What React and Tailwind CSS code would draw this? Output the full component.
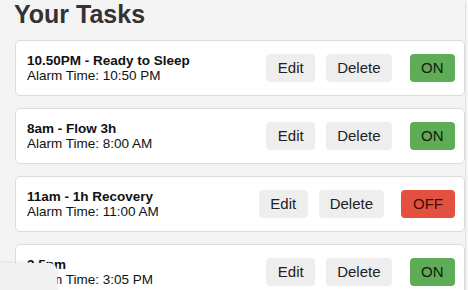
const TASKS = [
  { id: 1, title: '10.50PM - Ready to Sleep', time: '10:50 PM', on: true },
  { id: 2, title: '8am - Flow 3h', time: '8:00 AM', on: true },
  { id: 3, title: '11am - 1h Recovery', time: '11:00 AM', on: false },
  { id: 4, title: '3.5pm', time: '3:05 PM', on: true },
]

export default function App() {
  return (
    <div className="relative h-[290px] overflow-hidden bg-[#f4f4f4] font-['Liberation_Sans',Arial,sans-serif]">
      <div className="w-[466px] h-full border-r border-[#e2e2e2] pl-[15px]">
        <h1 className="mt-[2px] -ml-px text-[25px] leading-none font-bold text-[#333]">Your Tasks</h1>

        <div className="mt-[13px] flex flex-col gap-[12px]">
          {TASKS.map(t => (
            <div
              key={t.id}
              className="flex h-[56px] shrink-0 items-center rounded-[5px] border border-[#dcdcdc] bg-white pl-[11px] pr-[9px]"
            >
              <div className="flex-1 text-[13.5px] leading-[15px] text-[#111]">
                <p className="font-bold">{t.title}</p>
                <p>Alarm Time: {t.time}</p>
              </div>
              <button className="h-[28px] rounded-[4px] bg-[#eeeeee] px-[11.5px] text-[15px] text-[#222]">Edit</button>
              <button className="ml-[11px] h-[28px] rounded-[4px] bg-[#eeeeee] px-[11px] text-[15px] text-[#222]">Delete</button>
              {t.on ? (
                <button className="ml-[18px] h-[28px] rounded-[4px] bg-[#5fac56] px-[11.5px] text-[15px] text-[#10200e]">ON</button>
              ) : (
                <button className="ml-[17px] h-[28px] rounded-[4px] bg-[#e4503f] px-[12px] text-[15px] text-[#3a0c06]">OFF</button>
              )}
            </div>
          ))}
        </div>
      </div>

      {/* floating corner widget */}
      <div className="absolute left-0 top-[263px] h-[30px] w-[57px] rounded-tr-[8px] bg-[#f1f1f1] shadow-[0_0_4px_rgba(0,0,0,0.12)]" />
    </div>
  )
}
